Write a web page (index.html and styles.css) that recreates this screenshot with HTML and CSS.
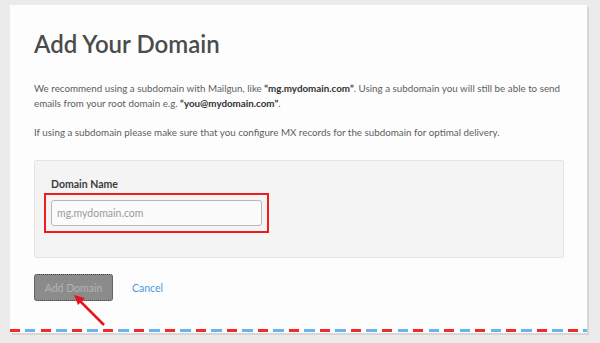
FILE: index.html
```html
<!DOCTYPE html>
<html lang="en">
<head>
  <meta charset="UTF-8">
  <meta name="viewport" content="width=device-width, initial-scale=1.0">
  <title>Add Your Domain</title>
  <link rel="stylesheet" href="styles.css">
</head>
<body>
  <div class="page">
    <div class="card">
      <h1>Add Your Domain</h1>
      <p class="intro">We recommend using a subdomain with Mailgun, like <b>&ldquo;mg.mydomain.com&rdquo;</b>. Using a subdomain you will still be able to send emails from your root domain e.g. <b>&ldquo;you@mydomain.com&rdquo;</b>.</p>
      <p class="intro">If using a subdomain please make sure that you configure MX records for the subdomain for optimal delivery.</p>

      <div class="field-box">
        <label for="domain-name">Domain Name</label>
        <div class="highlight">
          <input type="text" id="domain-name" placeholder="mg.mydomain.com" />
        </div>
      </div>

      <div class="actions">
        <button class="btn-add" disabled>Add Domain</button>
        <a href="#" class="cancel">Cancel</a>
        <!-- 标注箭头 -->
        <svg class="arrow" width="40" height="40" viewBox="0 0 40 40">
          <line x1="34" y1="35" x2="9" y2="10" stroke="#e8141c" stroke-width="2.5" />
          <polygon points="4,5 15,8 8,15" fill="#e8141c" />
        </svg>
      </div>

      <div class="airmail"></div>
    </div>
  </div>
</body>
</html>
```

FILE: styles.css
```css
body {
  margin: 0;
  padding: 0;
  font-family: "Lato", "Open Sans", sans-serif;
  background-color: #ebebeb;
  color: #5a5a5a;
}

.page {
  padding: 5px 13px 10px 10px;
}

.card {
  position: relative;
  background-color: #fdfdfd;
  height: 328px;
  box-sizing: border-box;
  padding: 25px 23px 0 24px;
  box-shadow: 2px 2px 0 #d6d6d6;
}

.card h1 {
  margin: 0 0 23px;
  font-size: 24px;
  line-height: 28px;
  font-weight: 600;
  color: #4b4b4b;
}

.intro {
  margin: 0 0 14px;
  font-size: 9.8px;
  line-height: 15px;
  color: #5e5e5e;
}

.intro b {
  color: #333;
  font-weight: 700;
}

.field-box {
  margin-top: 20px;
  background-color: #f4f4f4;
  border: 1px solid #e4e4e4;
  border-radius: 2px;
  padding: 16px 16px 24px 9px;
}

.field-box label {
  display: block;
  margin-left: 7px;
  font-size: 10.5px;
  line-height: 15px;
  font-weight: 700;
  color: #3c3c3c;
  margin-bottom: 1px;
}

.highlight {
  width: fit-content;
  border: 2px solid #ee1c1c;
  padding: 5px;
}

.highlight input {
  display: block;
  width: 211px;
  height: 26px;
  box-sizing: border-box;
  padding: 0 5px;
  border: 1px solid #b8b8b8;
  border-radius: 3px;
  background: #fbfbfb;
  font-family: inherit;
  font-size: 10.5px;
  color: #555;
  outline: none;
}

.highlight input::placeholder {
  color: #9a9a9a;
}

.actions {
  position: relative;
  display: flex;
  align-items: center;
  gap: 19px;
  margin-top: 16px;
}

.btn-add {
  width: 79px;
  height: 27px;
  background-color: #8b8b8b;
  border: 1px dotted #3e3e3e;
  border-radius: 3px;
  color: #b3b3b3;
  font-family: inherit;
  font-size: 10.5px;
}

.cancel {
  color: #4a9be0;
  text-decoration: none;
  font-size: 10.5px;
}

.arrow {
  position: absolute;
  left: 36px;
  top: 16px;
}

.airmail {
  position: absolute;
  left: 0;
  right: 0;
  bottom: 1px;
  height: 3px;
  background: repeating-linear-gradient(90deg, #ef2b2b 0 10px, transparent 10px 15.5px, #6bb3ee 15.5px 25.5px, transparent 25.5px 31px);
}
```
